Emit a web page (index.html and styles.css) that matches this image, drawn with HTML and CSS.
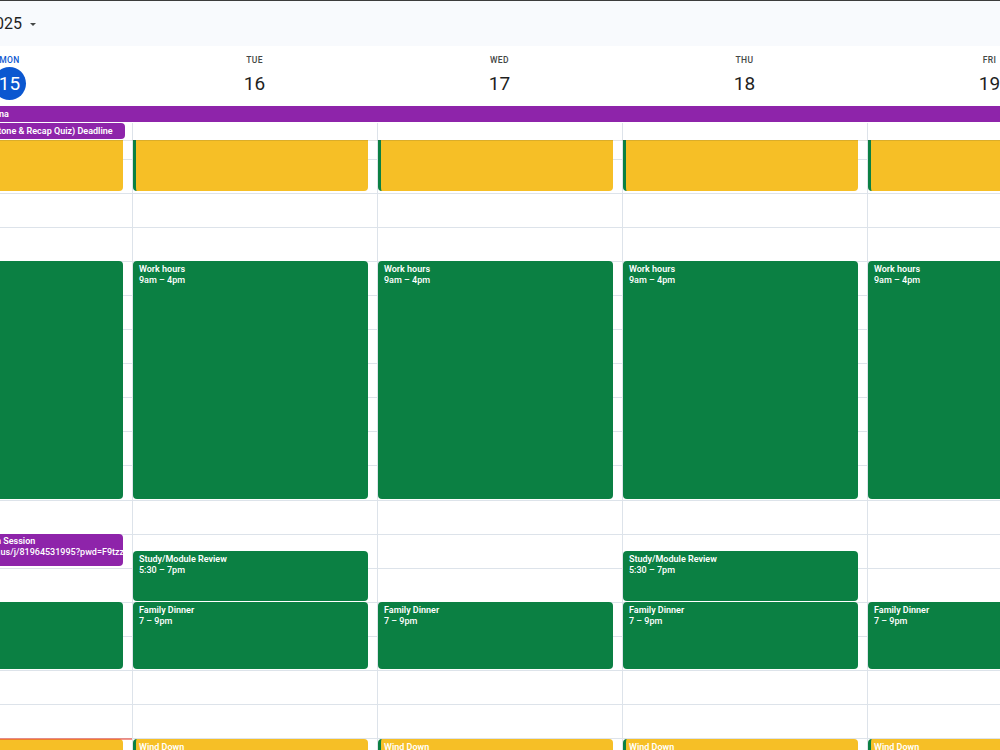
FILE: index.html
```html
<!DOCTYPE html>
<html lang="en">
<head>
    <meta charset="UTF-8">
    <meta name="viewport" content="width=device-width, initial-scale=1.0">
    <title>Calendar - Week of 15 September 2025</title>
    <link rel="stylesheet" href="styles.css">
</head>
<body>
    <header class="topbar">
        <div class="title-clip"><span class="title">September 2025</span></div>
        <span class="caret"></span>
    </header>

    <div class="cal">
        <!-- day names and dates -->
        <div class="day-heads">
            <div class="day-head today"><div class="dow">Mon</div><div class="date">15</div></div>
            <div class="day-head"><div class="dow">Tue</div><div class="date">16</div></div>
            <div class="day-head"><div class="dow">Wed</div><div class="date">17</div></div>
            <div class="day-head"><div class="dow">Thu</div><div class="date">18</div></div>
            <div class="day-head"><div class="dow">Fri</div><div class="date">19</div></div>
        </div>

        <!-- all day events -->
        <div class="allday">
            <div class="ad-bar">School Holidays – Barcelona</div>
            <div class="ad-row">
                <div class="ad-cell"><div class="ad-chip">Assignment Task 2 (Milestone &amp; Recap Quiz) Deadline</div></div>
                <div class="ad-cell"></div>
                <div class="ad-cell"></div>
                <div class="ad-cell"></div>
                <div class="ad-cell"></div>
            </div>
        </div>

        <!-- time grid, scrolled to 6am -->
        <div class="grid">
            <div class="day-col">
                <div class="day-inner">
                    <div class="ev yellow sleep"><div class="ev-title">Sleep</div></div>
                    <div class="ev green work"><div class="ev-title">Work hours</div><div class="ev-time">9am – 4pm</div></div>
                    <div class="ev purple session"><div class="ev-title">Fortnightly Mentor Drop-in Session</div><div class="ev-time">5 – 6pm, https://uni.zoom.us/j/81964531995?pwd=F9tzzFqk2Lm</div></div>
                    <div class="ev green dinner"><div class="ev-title">Family Dinner</div><div class="ev-time">7 – 9pm</div></div>
                    <div class="ev yellow wind"><div class="ev-title">Wind Down</div></div>
                    <div class="now"></div>
                </div>
            </div>
            <div class="day-col">
                <div class="day-inner">
                    <div class="ev yellow sleep"><div class="ev-title">Sleep</div></div>
                    <div class="ev green work"><div class="ev-title">Work hours</div><div class="ev-time">9am – 4pm</div></div>
                    <div class="ev green study"><div class="ev-title">Study/Module Review</div><div class="ev-time">5:30 – 7pm</div></div>
                    <div class="ev green dinner"><div class="ev-title">Family Dinner</div><div class="ev-time">7 – 9pm</div></div>
                    <div class="ev yellow wind"><div class="ev-title">Wind Down</div></div>
                </div>
            </div>
            <div class="day-col">
                <div class="day-inner">
                    <div class="ev yellow sleep"><div class="ev-title">Sleep</div></div>
                    <div class="ev green work"><div class="ev-title">Work hours</div><div class="ev-time">9am – 4pm</div></div>
                    <div class="ev green dinner"><div class="ev-title">Family Dinner</div><div class="ev-time">7 – 9pm</div></div>
                    <div class="ev yellow wind"><div class="ev-title">Wind Down</div></div>
                </div>
            </div>
            <div class="day-col">
                <div class="day-inner">
                    <div class="ev yellow sleep"><div class="ev-title">Sleep</div></div>
                    <div class="ev green work"><div class="ev-title">Work hours</div><div class="ev-time">9am – 4pm</div></div>
                    <div class="ev green study"><div class="ev-title">Study/Module Review</div><div class="ev-time">5:30 – 7pm</div></div>
                    <div class="ev green dinner"><div class="ev-title">Family Dinner</div><div class="ev-time">7 – 9pm</div></div>
                    <div class="ev yellow wind"><div class="ev-title">Wind Down</div></div>
                </div>
            </div>
            <div class="day-col">
                <div class="day-inner">
                    <div class="ev yellow sleep"><div class="ev-title">Sleep</div></div>
                    <div class="ev green work"><div class="ev-title">Work hours</div><div class="ev-time">9am – 4pm</div></div>
                    <div class="ev green dinner"><div class="ev-title">Family Dinner</div><div class="ev-time">7 – 9pm</div></div>
                    <div class="ev yellow wind"><div class="ev-title">Wind Down</div></div>
                </div>
            </div>
        </div>
    </div>
</body>
</html>
```

FILE: styles.css
```css
* {
    box-sizing: border-box;
}

body {
    margin: 0;
    width: 1000px;
    height: 750px;
    overflow: hidden;
    font-family: Roboto, "Liberation Sans", sans-serif;
    background-color: #fff;
    color: #1f1f1f;
}

/* top bar */
.topbar {
    height: 46px;
    border-top: 1px solid #3c3c3c;
    background-color: #f8fafd;
    display: flex;
    align-items: center;
}

.title-clip {
    width: 22px;
    display: flex;
    justify-content: flex-end;
}

.title {
    white-space: nowrap;
    font-size: 16px;
    color: #1f1f1f;
}

.caret {
    margin-left: 8px;
    margin-top: 1px;
    border-left: 3px solid transparent;
    border-right: 3px solid transparent;
    border-top: 3px solid #444746;
}

/* week view, first column partly hidden on the left */
.cal {
    width: 1225px;
    margin-left: -113px;
}

.day-heads {
    display: grid;
    grid-template-columns: repeat(5, 245px);
    height: 60px;
}

.day-head {
    padding-top: 9px;
    text-align: center;
}

.dow {
    font-size: 8.5px;
    line-height: 10px;
    font-weight: 500;
    letter-spacing: 0.4px;
    text-transform: uppercase;
    color: #444746;
}

.date {
    width: 33px;
    height: 33px;
    margin: 2px auto 0;
    border-radius: 50%;
    display: flex;
    align-items: center;
    justify-content: center;
    font-size: 19px;
    color: #1f1f1f;
}

.today .dow {
    color: #0b57d0;
}

.today .date {
    background-color: #0b57d0;
    color: #fff;
}

/* all day section */
.allday {
    height: 34px;
}

.ad-bar {
    height: 16px;
    margin-bottom: 1px;
    padding: 0 6px;
    background-color: #8e24aa;
    color: #fff;
    font-size: 9px;
    line-height: 16px;
    font-weight: 600;
    white-space: nowrap;
}

.ad-row {
    display: grid;
    grid-template-columns: repeat(5, 245px);
    height: 17px;
}

.ad-cell {
    border-left: 1px solid #dde3ea;
    padding-right: 7px;
}

.ad-chip {
    height: 16px;
    padding: 0 6px;
    border-radius: 0 4px 4px 0;
    background-color: #8e24aa;
    color: #fff;
    font-size: 9px;
    line-height: 16px;
    font-weight: 600;
    white-space: nowrap;
    overflow: hidden;
}

/* time grid: one hour = 34.1px */
.grid {
    position: relative;
    display: grid;
    grid-template-columns: repeat(5, 245px);
    height: 610px;
    overflow: hidden;
}

.grid::before {
    content: "";
    position: absolute;
    top: 0;
    left: 0;
    right: 0;
    height: 1px;
    background-color: rgba(60, 64, 67, 0.14);
    z-index: 3;
}

.day-col {
    border-left: 1px solid #dde3ea;
}

.day-inner {
    position: relative;
    height: 818.4px;
    margin-top: -185.6px;
    background: repeating-linear-gradient(to bottom, #dde3ea 0, #dde3ea 1px, transparent 1px, transparent 34.1px);
}

.ev {
    position: absolute;
    left: 0;
    right: 9px;
    padding: 3px 6px 1px;
    border-radius: 4px;
    color: #fff;
    font-size: 9px;
    line-height: 10.5px;
    overflow: hidden;
    white-space: nowrap;
}

.ev-title {
    font-weight: 600;
}

.ev-time {
    font-weight: 500;
}

.green {
    background-color: #0b8043;
}

.purple {
    background-color: #8e24aa;
}

.session {
    padding-top: 2px;
}

.yellow {
    background-color: #f6bf26;
    border-left: 3px solid #0b8043;
    padding-left: 3px;
}

.sleep   { top: 0;        height: 236.7px; }
.work    { top: 306.9px;  height: 237.7px; }
.session { top: 579.7px;  height: 32.1px; }
.study   { top: 596.75px; height: 50.15px; }
.dinner  { top: 647.9px;  height: 67.2px; }
.wind    { top: 784.3px;  height: 33.1px; }

/* current time line */
.now {
    position: absolute;
    top: 784px;
    left: 0;
    right: 0;
    height: 2px;
    background-color: rgba(234, 67, 53, 0.55);
    z-index: 2;
}
```
